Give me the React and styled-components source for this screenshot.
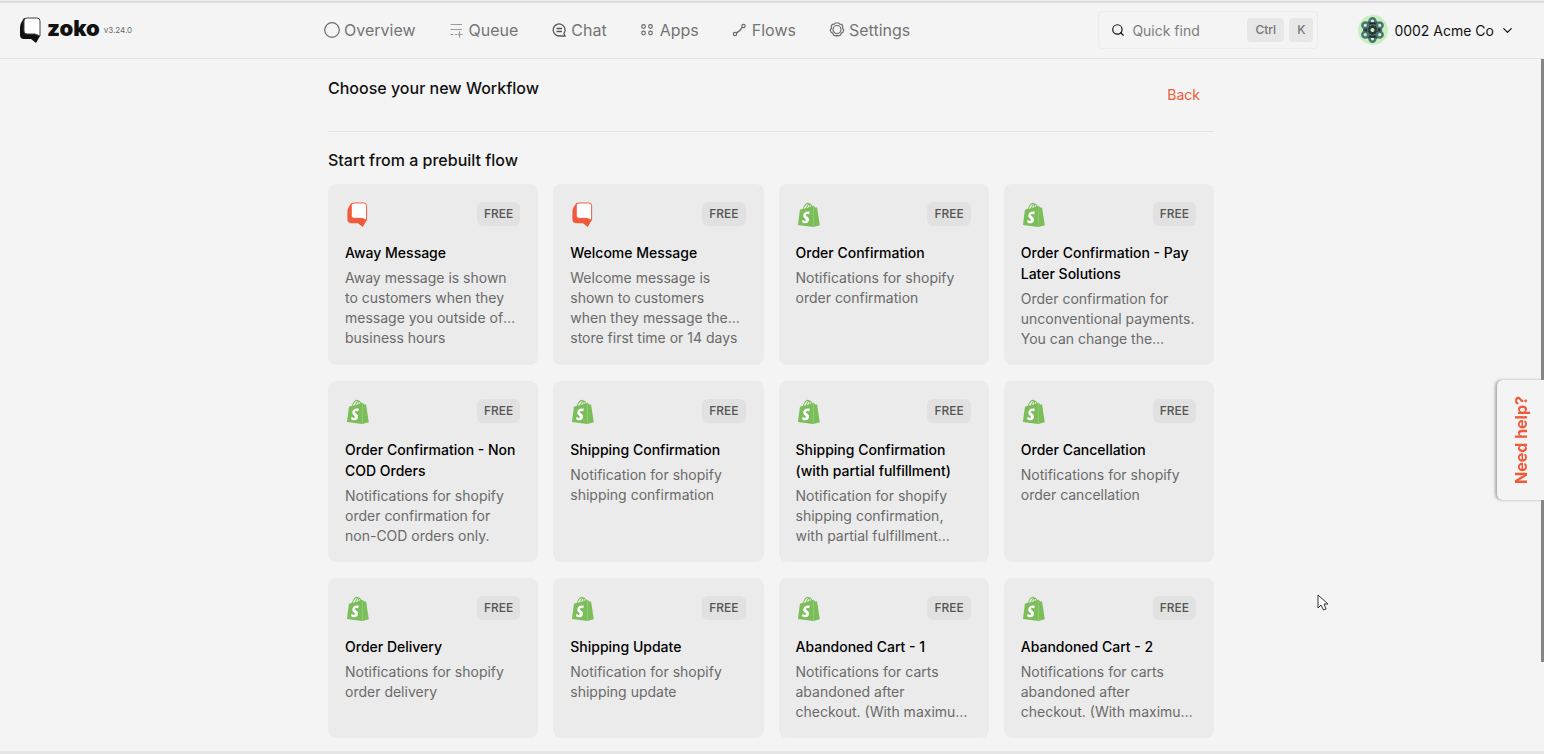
import React, { useState } from 'react'
import styled, { createGlobalStyle } from 'styled-components'
import { ChevronDown, Search } from 'lucide-react'

const colors = {
  page: '#f4f4f4',
  card: '#ebebeb',
  badge: '#e1e1e1',
  line: '#e4e4e4',
  text: '#111111',
  muted: '#6a6a6a',
  primary: '#f0593a',
  shopify: '#7abd59'
}

const GlobalStyle = createGlobalStyle`
* {
  box-sizing: border-box;
}
body {
  margin: 0;
  background-color: ${colors.page};
  color: ${colors.text};
  font-family: Inter, "Liberation Sans", sans-serif;
}
button, input {
  font-family: inherit;
}
h1, h2, h3, p {
  margin: 0;
  font-weight: 400;
}
`

const PageContainer = styled.div`
display: flex;
flex-direction: column;
height: 100vh;
border-bottom: 3px solid #e5e5e5;
`

const Header = styled.header`
flex: none;
display: flex;
align-items: center;
height: 59px;
padding: 2px 29px 0 20px;
border-bottom: 1px solid ${colors.line};
box-shadow: inset 0 1px #ebebeb, inset 0 3px #dcdcdc;
`

const Brand = styled.a`
display: flex;
align-items: center;
flex: 0 0 304px;
color: ${colors.text};
text-decoration: none;
`

const BrandName = styled.span`
margin-left: 6px;
font-size: 22px;
font-weight: 900;
line-height: 24px;
padding-bottom: 4px;
`

const Version = styled.span`
margin-left: 4px;
font-size: 8px;
color: ${colors.muted};
`

const Nav = styled.nav`
display: flex;
gap: 33px;
`

const NavLink = styled.a`
display: flex;
align-items: center;
gap: 4px;
font-size: 16px;
line-height: 24px;
color: #757575;
text-decoration: none;
`

const SearchBox = styled.label`
display: flex;
align-items: center;
gap: 5px;
width: 220px;
height: 38px;
margin-left: auto;
padding: 0 4px 0 12px;
border: 1px solid #ececec;
border-radius: 4px;
`

const SearchInput = styled.input`
flex: 1;
min-width: 0;
padding: 0 0 0 2px;
border: 0;
outline: 0;
background: none;
font-size: 14px;
&::placeholder {
  color: #7d7d7d;
}
`

const Key = styled.kbd`
padding: 0 8px;
border-radius: 4px;
background-color: #e7e7e7;
color: #757575;
font-family: inherit;
font-size: 12px;
font-weight: 500;
line-height: 24px;
`

const Account = styled.button`
display: flex;
align-items: center;
gap: 6px;
margin-left: 40px;
padding: 0;
border: 0;
background: none;
color: ${colors.text};
font-size: 14px;
`

const Content = styled.main`
flex: 1;
min-height: 0;
overflow: hidden;
padding: 0 2px 0 0;
`

const Inner = styled.div`
max-width: 886px;
margin: 0 auto;
`

const TitleRow = styled.div`
display: flex;
justify-content: space-between;
height: 73px;
padding: 17px 14px 0 0;
border-bottom: 1px solid ${colors.line};
`

const Title = styled.h1`
font-size: 16px;
font-weight: 500;
line-height: 24px;
`

const BackLink = styled.a`
padding-top: 7px;
font-size: 14px;
line-height: 24px;
height: 31px;
color: ${colors.primary};
text-decoration: none;
`

const SectionTitle = styled.h2`
padding: 16px 0 12px;
font-size: 16px;
font-weight: 500;
line-height: 24px;
`

const CardGrid = styled.div`
display: grid;
grid-template-columns: repeat(4, 1fr);
gap: 16px 15px;
`

const Card = styled.article`
display: flex;
flex-direction: column;
padding: 17px 17px 16px;
border-radius: 8px;
background-color: ${colors.card};
`

const CardTop = styled.div`
display: flex;
align-items: center;
justify-content: space-between;
height: 26px;
margin-bottom: 15px;
padding: 0 1px 0 2px;
`

const Badge = styled.span`
padding: 0 7px;
border-radius: 6px;
background-color: ${colors.badge};
color: #555;
font-size: 12px;
font-weight: 500;
line-height: 24px;
`

const CardTitle = styled.h3`
margin-bottom: 5px;
font-size: 14px;
font-weight: 500;
line-height: 21px;
color: #000;
`

const CardText = styled.p`
flex: 1;
display: -webkit-box;
-webkit-box-orient: vertical;
-webkit-line-clamp: 3;
overflow: hidden;
font-size: 14px;
line-height: 20px;
color: ${colors.muted};
`

const HelpTab = styled.button`
position: fixed;
right: 0;
top: 380px;
z-index: 1;
display: flex;
align-items: center;
justify-content: center;
width: 47px;
height: 120px;
padding: 0;
border: 0;
border-radius: 6px 0 0 6px;
background-color: ${colors.page};
box-shadow: -2px 0 3px #aaa;
color: ${colors.primary};
font-size: 16px;
font-weight: 700;
span {
  writing-mode: vertical-rl;
  transform: rotate(180deg);
}
`

const ScrollThumb = styled.div`
position: fixed;
top: 59px;
right: 0;
width: 3px;
height: 80vh;
background-color: #868686;
`

const Pointer = styled.svg`
position: fixed;
left: 1317px;
top: 594px;
`

const ZokoMark = ({ color, edge, width = 21, height = 26 }) => (
  <svg width={width} height={height} viewBox="0 0 21 26" aria-hidden="true">
    <path d="M4 1 L1 6 Q0 8 0 11 V18 Q0 22 4 22 H11 L16 26 L20 19 V4 Z" fill={color} />
    <path d="M7 1 H17 Q20 1 20 4 V19 L15 17 H7 Q4 17 4 14 V4 Q4 1 7 1 Z" fill="#fff" stroke={edge} strokeWidth="1" />
  </svg>
)

const ShopifyMark = () => (
  <svg width="22" height="25" viewBox="0 0 110 125" aria-hidden="true">
    <path
      fill={colors.shopify}
      d="M95.6 28.2c-.1-.6-.6-1-1.1-1s-9.3-.2-9.3-.2-7.4-7.2-8.1-7.9c-.7-.7-2.2-.5-2.7-.3 0 0-1.4.4-3.7 1.1-.4-1.3-1-2.8-1.8-4.4-2.6-5-6.5-7.7-11.1-7.7-.3 0-.6 0-1 .1-.1-.2-.3-.3-.4-.5-2-2.2-4.6-3.2-7.7-3.1-6 .2-12 4.5-16.8 12.2-3.4 5.4-6 12.2-6.8 17.5-6.9 2.1-11.7 3.6-11.8 3.7-3.5 1.1-3.6 1.2-4 4.5C9 44.7 0 115.2 0 115.2l76.4 9.2 33.1-8.2C109.5 115.8 95.7 28.8 95.6 28.2zM67.2 22.4c-1.8.5-3.8 1.2-5.9 1.8 0-3-.4-7.3-1.8-10.9 4.5.9 6.7 6 7.7 9.1zM57.2 25.5c-4 1.2-8.4 2.6-12.8 3.900 1.200-4.700 3.600-9.400 6.400-12.500 1.100-1.100 2.600-2.400 4.300-3.200 1.800 3.800 2.200 8.900 2.100 11.800zM49.100 9.700c1.400 0 2.600.3 3.600.9-1.600.8-3.200 2.100-4.700 3.600-3.800 4.100-6.700 10.500-7.900 16.600l-10.500 3.200C31.700 24.500 39.800 9.900 49.100 9.700z"
    />
    <path d="M77 21V123" stroke="#a3d38c" strokeWidth="3" />
    <path
      fill="#fff"
      d="M60 49l-4.500 12.500s-4-2-9-2c-7.200 0-7.600 4.500-7.600 5.600 0 6.200 16.200 8.600 16.200 23 0 11.500-7.300 18.700-17 18.700-11.700 0-17.800-7.200-17.800-7.200l3.200-10.400s6 5.200 11.300 5.200c3.400 0 4.800-2.600 4.800-4.600 0-8-13.200-8.400-13.200-21.600C26.400 57.500 34.500 47 50.700 47c6.200 0 9.300 2 9.300 2z"
    />
  </svg>
)

const NavIcon = ({ children }) => (
  <svg width="16" height="16" viewBox="0 0 16 16" fill="none" stroke="#6b6b6b" strokeWidth="1.2" aria-hidden="true">
    {children}
  </svg>
)

const navItems = [
  { label: 'Overview', icon: <circle cx="8" cy="8" r="7.3" /> },
  {
    label: 'Queue',
    icon: <path d="M1.500 2.500H13M1.500 7.500H13M1.500 12.500H4.500M6 12.500H8M10.500 9.500V15.500M8.500 12.500H13.500" stroke="#9a9a9a" />
  },
  {
    label: 'Chat',
    icon: <path d="M14 14H8A6 6 0 1 1 13 11.500ZM5.500 6.500H11M5.500 9.500H11" stroke="#555" strokeWidth="1.300" />
  },
  {
    label: 'Apps',
    icon: (
      <>
        <circle cx="3.500" cy="4.500" r="1.800" />
        <circle cx="10.500" cy="4.500" r="1.800" />
        <circle cx="3.500" cy="11" r="1.800" />
        <circle cx="10.500" cy="11" r="1.800" />
      </>
    )
  },
  {
    label: 'Flows',
    icon: (
      <>
        <circle cx="3" cy="12" r="1.700" />
        <circle cx="11.500" cy="4" r="1.700" />
        <path d="M4.300 11C6.500 10 9 7.500 10.200 5.300" strokeWidth="1.400" />
      </>
    )
  },
  {
    label: 'Settings',
    icon: (
      <>
        <circle cx="8" cy="7.500" r="4" />
        <path d="M6.200 1H9.800L10.700 2.200L12.800 2.400L13.800 4.600L13.500 6.200L14.800 8L13.800 10.400L12.200 11.200L11.500 13L9 14L8 13.200L7 14L4.500 13L3.800 11.200L2.200 10.400L1.200 8L2.500 6.200L2.200 4.600L3.200 2.400L5.300 2.200Z" />
      </>
    )
  }
]

const petals = [[14, 6], [21, 10], [21, 19], [14, 23], [7, 19], [7, 10]]

const Avatar = () => (
  <svg width="30" height="30" viewBox="0 0 29 29" aria-hidden="true">
    <circle cx="14.500" cy="14.500" r="14.500" fill="#c9efc0" />
    <path d="M14 6L21 10V19L14 23L7 19V10ZM7 10L21 19M21 10L7 19M14 6V23" stroke="#2b3937" strokeWidth="4" fill="none" />
    {petals.map(([x, y]) => (
      <circle key={`${x}-${y}`} cx={x} cy={y} r="2.800" fill="#d3e9df" stroke="#47776e" strokeWidth="2.400" />
    ))}
    <path d="M11 8L17 8M20 13V16M8 13V16M11 21H17" stroke="#232d2c" strokeWidth="2" />
    <circle cx="14" cy="14.500" r="3" fill="#c5ead0" stroke="#2b3937" strokeWidth="2" />
  </svg>
)

const flows = [
  { title: 'Away Message', app: 'zoko', text: 'Away message is shown to customers when they message you outside of business hours' },
  { title: 'Welcome Message', app: 'zoko', text: 'Welcome message is shown to customers when\u00a0they message the store first time or 14 days' },
  { title: 'Order Confirmation', text: 'Notifications for shopify order confirmation' },
  { title: 'Order Confirmation - Pay Later Solutions', text: 'Order confirmation for unconventional payments. You can change the conditions' },
  { title: 'Order Confirmation - Non COD Orders', text: 'Notifications for shopify order confirmation for non-COD orders only.' },
  { title: 'Shipping Confirmation', text: 'Notification for shopify shipping confirmation' },
  { title: 'Shipping Confirmation (with partial fulfillment)', text: 'Notification for shopify shipping confirmation, with partial fulfillment information' },
  { title: 'Order Cancellation', text: 'Notifications for shopify order cancellation' },
  { title: 'Order Delivery', text: 'Notifications for shopify order delivery' },
  { title: 'Shipping Update', text: 'Notification for shopify shipping update' },
  { title: 'Abandoned Cart - 1', text: 'Notifications for carts abandoned after checkout. (With maximum one reminder)' },
  { title: 'Abandoned Cart - 2', text: 'Notifications for carts abandoned after checkout. (With maximum two reminders)' }
]

function App() {

  const [query, setQuery] = useState('')

  return (
    <PageContainer>
      <GlobalStyle />

      <Header>
        <Brand href="#">
          <ZokoMark color="#111" edge="#444" />
          <BrandName>zoko</BrandName>
          <Version>v3.24.0</Version>
        </Brand>
        <Nav>
          {navItems.map(({ label, icon }) => (
            <NavLink key={label} href={`#${label.toLowerCase()}`}>
              <NavIcon>{icon}</NavIcon>
              {label}
            </NavLink>
          ))}
        </Nav>
        <SearchBox>
          <Search size={14} strokeWidth={2} />
          <SearchInput
            aria-label="Quick find"
            placeholder="Quick find"
            value={query}
            onChange={(e) => setQuery(e.target.value)}
          />
          <Key>Ctrl</Key>
          <Key>K</Key>
        </SearchBox>
        <Account type="button">
          <Avatar />
          0002 Acme Co
          <ChevronDown size={15} />
        </Account>
      </Header>

      <Content>
        <Inner>
          <TitleRow>
            <Title>Choose your new Workflow</Title>
            <BackLink href="#flows">Back</BackLink>
          </TitleRow>
          <SectionTitle>Start from a prebuilt flow</SectionTitle>
          <CardGrid>
            {flows.map(({ title, app, text }) => (
              <Card key={title}>
                <CardTop>
                  {app === 'zoko' ? <ZokoMark color={colors.primary} edge={colors.primary} height={25} /> : <ShopifyMark />}
                  <Badge>FREE</Badge>
                </CardTop>
                <CardTitle>{title}</CardTitle>
                <CardText>{text}</CardText>
              </Card>
            ))}
          </CardGrid>
        </Inner>
      </Content>

      <ScrollThumb />
      <HelpTab type="button"><span>Need help?</span></HelpTab>

      <Pointer width="12" height="18" viewBox="0 0 12 18" aria-hidden="true">
        <path d="M1 1V14L4 11L6.500 16L9 15L7 10H11Z" fill="#fff" stroke="#333" />
      </Pointer>
    </PageContainer>
  )
}

export default App
